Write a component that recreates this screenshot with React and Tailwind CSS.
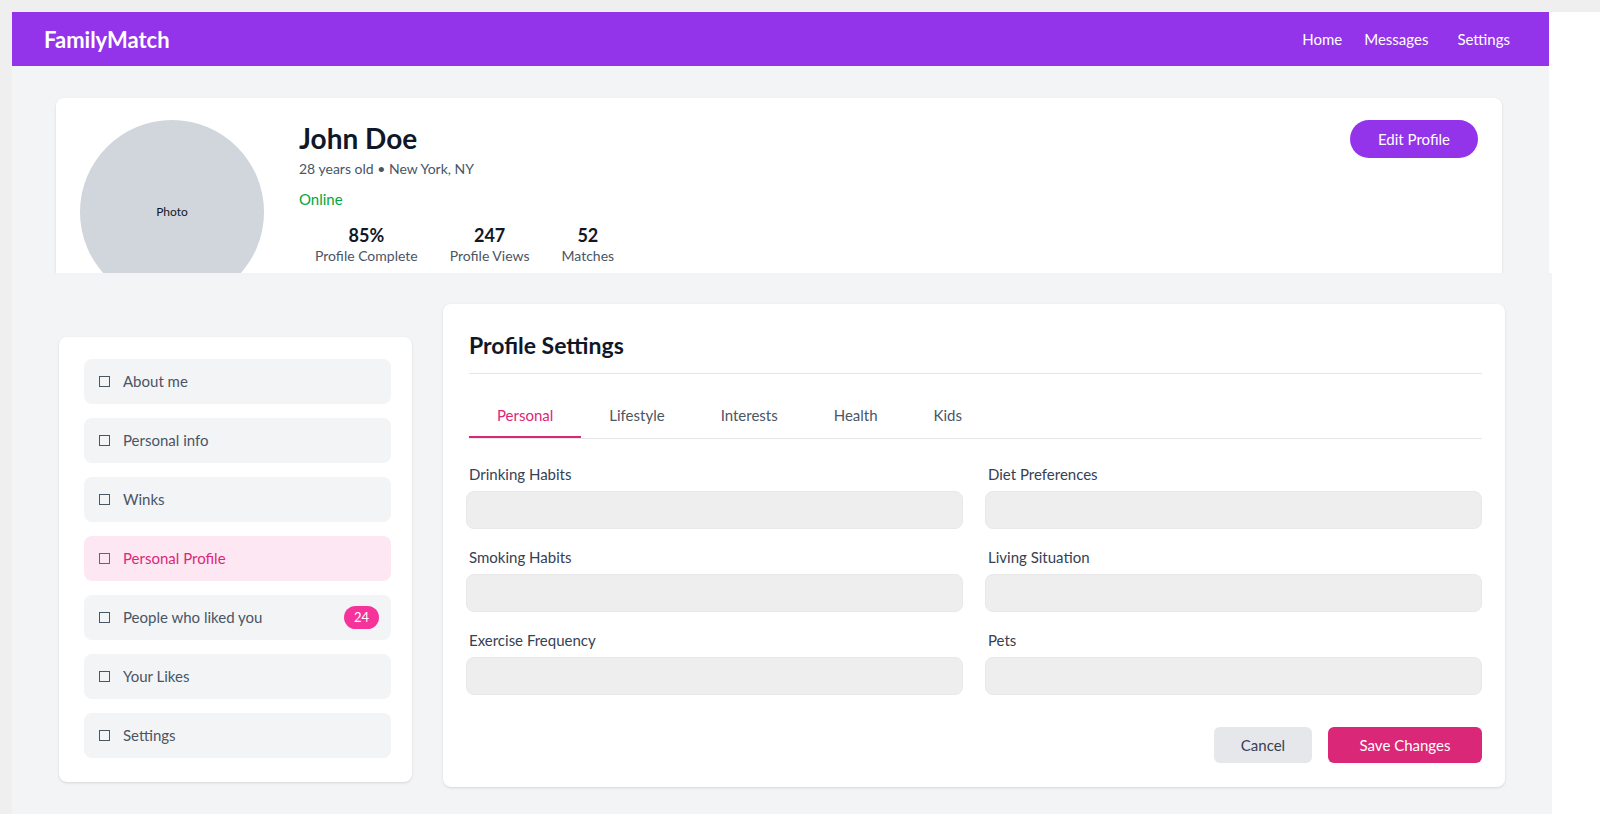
import React from 'react';

const navItems = [
  { label: 'About me' },
  { label: 'Personal info' },
  { label: 'Winks' },
  { label: 'Personal Profile', active: true },
  { label: 'People who liked you', badge: 24 },
  { label: 'Your Likes' },
  { label: 'Settings' },
];

const tabs = ['Personal', 'Lifestyle', 'Interests', 'Health', 'Kids'];

const fields = [
  'Drinking Habits',
  'Diet Preferences',
  'Smoking Habits',
  'Living Situation',
  'Exercise Frequency',
  'Pets',
];

const stats = [
  { value: '85%', label: 'Profile Complete' },
  { value: '247', label: 'Profile Views' },
  { value: '52', label: 'Matches' },
];

const Navbar = () => (
  <nav className="h-[54px] bg-[#9333ea] flex items-center justify-between pl-8 pr-[39px]">
    <span className="text-white text-[22px] font-bold">FamilyMatch</span>
    <div className="flex items-center text-white text-[15px]">
      <a>Home</a>
      <a className="ml-[22px]">Messages</a>
      <a className="ml-[29px]">Settings</a>
    </div>
  </nav>
);

const ProfileHeader = () => (
  <section className="h-[207px] overflow-hidden bg-gray-100 pt-8 pl-[44px] pr-[47px]">
    <div className="bg-white rounded-lg shadow-sm pt-[22px] px-6 pb-6 flex">
      <div className="w-[184px] h-[184px] rounded-full bg-gray-300 flex items-center justify-center shrink-0">
        <span className="text-[12px] text-gray-900">Photo</span>
      </div>
      <div className="ml-[35px]">
        <h1 className="text-[28px] leading-[36px] font-bold text-gray-900">John Doe</h1>
        <p className="mt-[2px] text-[14px] leading-[22px] text-gray-600">28 years old • New York, NY</p>
        <p className="mt-[8px] text-[15px] leading-[22px] text-green-600">Online</p>
        <div className="flex mt-[13px]">
          {stats.map((s) => (
            <div key={s.label} className="px-4 text-center">
              <div className="text-[18px] leading-[24px] font-bold text-gray-900">{s.value}</div>
              <div className="text-[14px] leading-[18px] text-gray-600">{s.label}</div>
            </div>
          ))}
        </div>
      </div>
      <button className="ml-auto self-start h-[38px] px-7 rounded-full bg-[#9333ea] text-white text-[15px]">
        Edit Profile
      </button>
    </div>
  </section>
);

const Sidebar = () => (
  <aside className="mt-[33px] w-[353px] shrink-0 bg-white rounded-lg shadow-sm pt-[22px] pb-6 pl-[25px] pr-[21px] flex flex-col gap-[14px]">
    {navItems.map((item) => (
      <div
        key={item.label}
        className={`h-[45px] rounded-lg flex items-center pl-[15px] pr-3 gap-[13px] text-[15px] ${
          item.active ? 'bg-pink-100 text-[#db2777]' : 'bg-gray-100 text-gray-600'
        }`}
      >
        <span
          className={`w-[11px] h-[11px] border-[1.5px] ${item.active ? 'border-[#db2777]' : 'border-gray-600'}`}
        ></span>
        <span>{item.label}</span>
        {item.badge && (
          <span className="ml-auto w-[35px] h-[23px] rounded-full bg-pink-500 text-white text-[13px] flex items-center justify-center">
            {item.badge}
          </span>
        )}
      </div>
    ))}
  </aside>
);

const SettingsCard = () => (
  <div className="w-[1062px] bg-white rounded-lg shadow-sm pt-[27px] pb-6 pl-[26px] pr-[23px]">
    <h2 className="text-[23px] leading-[28px] font-bold text-gray-900 pb-[14px] border-b border-gray-200">
      Profile Settings
    </h2>
    <div className="mt-[21px] flex border-b border-gray-200">
      {tabs.map((t, i) => (
        <button
          key={t}
          className={`px-7 h-[43px] text-[15px] ${
            i === 0 ? 'text-[#db2777] border-b-2 border-[#db2777]' : 'text-gray-600 border-b-2 border-transparent'
          }`}
        >
          {t}
        </button>
      ))}
    </div>
    <div className="mt-[25px] -ml-[3px] grid grid-cols-2 gap-x-[22px] gap-y-[18px]">
      {fields.map((f) => (
        <div key={f}>
          <label className="block ml-[3px] text-[15px] leading-[20px] text-gray-700 mb-[7px]">{f}</label>
          <div className="h-[38px] rounded-lg bg-[#eeeeee] border border-[#e8e8e8]"></div>
        </div>
      ))}
    </div>
    <div className="mt-8 flex justify-end gap-4">
      <button className="w-[98px] h-[36px] rounded-md bg-gray-200 text-gray-700 text-[15px]">Cancel</button>
      <button className="w-[154px] h-[36px] rounded-md bg-[#db2777] text-white text-[15px]">Save Changes</button>
    </div>
  </div>
);

const App = () => {
  return (
    <div className="min-h-screen bg-[#efefef] pt-3 pl-3 font-['Lato','Noto_Sans',sans-serif]">
      <div className="bg-white h-[802px] overflow-hidden">
        <div className="w-[1537px]">
          <Navbar />
          <ProfileHeader />
        </div>
        <div className="w-[1540px] h-[541px] bg-gray-100 flex items-start gap-[31px] pt-[31px] pl-[47px]">
          <Sidebar />
          <SettingsCard />
        </div>
      </div>
    </div>
  );
};

export default App;
